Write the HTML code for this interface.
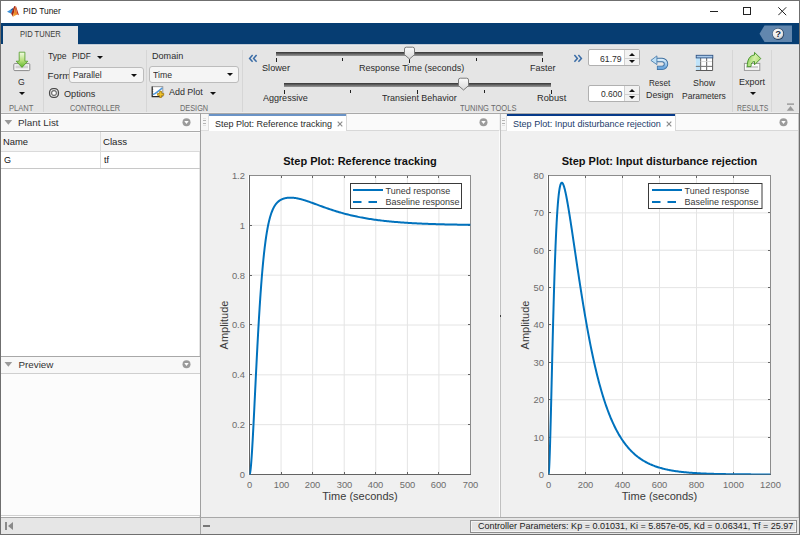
<!DOCTYPE html>
<html><head><meta charset="utf-8">
<style>
*{margin:0;padding:0;box-sizing:border-box}
html,body{width:800px;height:535px;overflow:hidden;background:#f0f0f0;font-family:"Liberation Sans",sans-serif;color:#222}
.a{position:absolute;white-space:nowrap}
.t{position:absolute;white-space:nowrap;line-height:1}
.rb{font-size:9.2px;color:#2c2c2c}
.lbl{font-size:8.3px;color:#6a6a6a}
.sep{position:absolute;top:50px;width:1px;height:62px;background:#d6d6d6}
.tri{position:absolute;width:0;height:0;border-left:3px solid transparent;border-right:3px solid transparent;border-top:3px solid #111}
.ptxt{font-size:9.6px;color:#2a2a2a}
</style></head><body>
<!-- window frame -->
<div class="a" style="left:0;top:0;width:800px;height:535px;border:1px solid #6f6f6f;background:#f0f0f0"></div>
<!-- title bar -->
<div class="a" style="left:1px;top:1px;width:798px;height:22px;background:#fff"></div>
<svg class="a" style="left:4px;top:3px" width="18" height="16" viewBox="0 0 18 16"><defs><linearGradient id="gm" x1="0" y1="1" x2="0.3" y2="0"><stop offset="0" stop-color="#f7c23a"/><stop offset="0.5" stop-color="#ee8a2a"/><stop offset="1" stop-color="#d2561e"/></linearGradient></defs>
<path d="M3,8.8 L7.2,6.2 L8.6,7.4 L7.4,10.8 Z" fill="#3f93da"/>
<path d="M6.6,6.6 L9.6,4.6 L8.6,7.8 Z" fill="#1f5c9e"/>
<path d="M7.2,10.8 L10.3,3.1 L11.3,3.3 L9.0,13.8 Z" fill="#a3260f"/>
<path d="M9.0,13.8 L11.3,3.3 C12.1,5.2 12.6,8.6 13.4,11.4 C11.8,12 10.4,12.8 8.6,14.2 Z" fill="url(#gm)"/>
<path d="M11.3,3.3 L12.1,3.5 C13.0,6 13.9,9 15.0,12.2 L13.4,11.4 C12.6,8.6 12.1,5.2 11.3,3.3 Z" fill="#c23a1c"/>
</svg>
<div class="t" style="left:22.52px;top:7.35px;font-size:8.8px;color:#111;transform:scaleX(0.9554);transform-origin:0 0">PID Tuner</div>
<div class="a" style="left:710px;top:11px;width:8px;height:1px;background:#222"></div>
<div class="a" style="left:743px;top:7px;width:8px;height:8px;border:1px solid #222"></div>
<svg class="a" style="left:778px;top:7px" width="9" height="9" viewBox="0 0 9 9"><path d="M0.3,0.3 L8.2,8.2 M8.2,0.3 L0.3,8.2" stroke="#222" stroke-width="1"/></svg>
<!-- blue band -->
<div class="a" style="left:1px;top:23px;width:798px;height:21px;background:#063d72"></div>
<div class="a" style="left:3px;top:26px;width:75px;height:18px;background:#e5e5e5"></div>
<div class="t" style="left:20.40px;top:29.72px;font-size:8.6px;color:#3c3c3c;transform:scaleX(0.8818);transform-origin:0 0">PID TUNER</div>
<svg class="a" style="left:759px;top:25px" width="34" height="18" viewBox="0 0 34 18"><path d="M5.5,0.5 H33 V17 H5.5 L0.5,8.7 Z" fill="#6287ae"/>
<defs><radialGradient id="gh" cx="0.4" cy="0.35" r="0.7"><stop offset="0" stop-color="#ffffff"/><stop offset="0.7" stop-color="#e8e8e8"/><stop offset="1" stop-color="#b8b8b8"/></radialGradient></defs><circle cx="19.2" cy="9" r="5.9" fill="#243f60"/><circle cx="19" cy="8.7" r="5.3" fill="url(#gh)"/>
<text x="19.1" y="12.2" font-family="Liberation Sans" font-weight="bold" font-size="9.5" fill="#1d2b40" text-anchor="middle">?</text></svg>
<!-- ribbon -->
<div class="a" style="left:1px;top:44px;width:798px;height:69px;background:#e5e5e5"></div>
<div class="a" style="left:78px;top:44px;width:721px;height:1px;background:#c2ccd7"></div>
<div class="a" style="left:78px;top:45px;width:721px;height:1px;background:#eaeaea"></div>
<div class="a" style="left:1px;top:112px;width:798px;height:1px;background:#ececec"></div>
<div class="a" style="left:1px;top:113px;width:798px;height:1px;background:#a9a9a9"></div>
<div class="sep" style="left:43px"></div>
<div class="sep" style="left:146px"></div>
<div class="sep" style="left:242px"></div>
<div class="sep" style="left:732px"></div>
<div class="sep" style="left:771px"></div>
<!-- PLANT -->
<svg class="a" style="left:12px;top:51px" width="20" height="21" viewBox="0 0 20 21">
  <defs><linearGradient id="ga" x1="0" y1="0" x2="0" y2="1"><stop offset="0" stop-color="#f2fbe6"/><stop offset="0.55" stop-color="#b6e07a"/><stop offset="1" stop-color="#5fb52a"/></linearGradient></defs>
  <rect x="1.8" y="12.6" width="16" height="7" rx="1" fill="#f6f6f6" stroke="#8a8a8a"/>
  <rect x="3.5" y="14.5" width="12.5" height="2.8" fill="#d2d2d2"/>
  <path d="M7.2,1.2 H12.9 V10.2 H15.8 L10,16.4 L4.2,10.2 H7.2 Z" fill="url(#ga)" stroke="#4f9a26" stroke-width="0.8" stroke-linejoin="round"/>
</svg>
<div class="t rb" style="left:18.43px;top:76.70px;font-size:9.8px;transform:scaleX(0.8889);transform-origin:0 0">G</div>
<div class="tri" style="left:19px;top:92px"></div>
<div class="t lbl" style="left:9.30px;top:103.99px;font-size:8.4px;transform:scaleX(0.9057);transform-origin:0 0">PLANT</div>
<!-- CONTROLLER -->
<div class="t rb" style="left:47.97px;top:51.40px;font-size:9.8px;transform:scaleX(0.8771);transform-origin:0 0">Type</div>
<div class="t rb" style="left:72.39px;top:51.40px;font-size:9.8px;transform:scaleX(0.8419);transform-origin:0 0">PIDF</div>
<div class="tri" style="left:97px;top:56px"></div>
<div class="t rb" style="left:47.50px;top:70.70px;font-size:9.8px">Form</div>
<div class="a" style="left:69px;top:67px;width:75px;height:16px;border:1px solid #bcbcbc;border-radius:3px;background:#f5f5f5"></div>
<div class="t rb" style="left:72.69px;top:70.20px;font-size:9.8px;transform:scaleX(0.8762);transform-origin:0 0">Parallel</div>
<div class="tri" style="left:131px;top:74px"></div>
<svg class="a" style="left:48px;top:87px" width="12" height="12" viewBox="0 0 12 12"><rect x="1.6" y="1.6" width="8.8" height="8.8" rx="3.6" fill="#f2f2f2" stroke="#4a4a4a" stroke-width="1.3"/><circle cx="6" cy="6" r="2.4" fill="#fff" stroke="#6a6a6a" stroke-width="1.1"/></svg>
<div class="t rb" style="left:64.38px;top:88.70px;font-size:9.8px;transform:scaleX(0.9293);transform-origin:0 0">Options</div>
<div class="t lbl" style="left:69.78px;top:103.89px;font-size:8.4px;transform:scaleX(0.8761);transform-origin:0 0">CONTROLLER</div>
<!-- DESIGN -->
<div class="t rb" style="left:151.84px;top:51.40px;font-size:9.8px;transform:scaleX(0.9252);transform-origin:0 0">Domain</div>
<div class="a" style="left:149px;top:66px;width:90px;height:17px;border:1px solid #bcbcbc;border-radius:3px;background:#f5f5f5"></div>
<div class="t rb" style="left:153.31px;top:69.70px;font-size:9.8px;transform:scaleX(0.8857);transform-origin:0 0">Time</div>
<div class="tri" style="left:227px;top:73px"></div>
<svg class="a" style="left:148px;top:82px" width="20" height="18" viewBox="0 0 20 18">
<rect x="4.2" y="4.7" width="10.6" height="9.8" fill="#fff" stroke="#8a8a8a" stroke-width="0.9"/>
<path d="M4.2,4.4 V14.6 H12" fill="none" stroke="#2a2a2a" stroke-width="1.1"/>
<path d="M4.2,7.3 H5.2 M4.2,9.6 H5.2 M4.2,11.9 H5.2" stroke="#333" stroke-width="0.8"/>
<path d="M4.8,12.6 C8,11.6 10,9.2 14.4,5.8" fill="none" stroke="#4f97da" stroke-width="1.5"/>
<path d="M11.7,9.3 h1.9 v2.1 h2.1 v1.9 h-2.1 v2.1 h-1.9 v-2.1 h-2.1 v-1.9 h2.1 z" fill="#f4c72a" stroke="#a07408" stroke-width="0.8" stroke-linejoin="round"/>
</svg>
<div class="t rb" style="left:169.31px;top:87.20px;font-size:9.8px;transform:scaleX(0.9108);transform-origin:0 0">Add Plot</div>
<div class="tri" style="left:210px;top:92px"></div>
<div class="t lbl" style="left:180.41px;top:103.89px;font-size:8.4px;transform:scaleX(0.8768);transform-origin:0 0">DESIGN</div>
<!-- TUNING TOOLS -->
<svg class="a" style="left:248px;top:54px" width="10" height="9" viewBox="0 0 10 9"><path d="M4.6,1 L1.6,4.4 L4.6,7.8 M8.6,1 L5.6,4.4 L8.6,7.8" fill="none" stroke="#3a6ca6" stroke-width="1.5"/></svg>
<svg class="a" style="left:573px;top:54px" width="10" height="9" viewBox="0 0 10 9"><path d="M1.4,1 L4.4,4.4 L1.4,7.8 M5.4,1 L8.4,4.4 L5.4,7.8" fill="none" stroke="#3a6ca6" stroke-width="1.5"/></svg>
<div class="a" style="left:276px;top:52px;width:267px;height:4px;background:linear-gradient(#333,#9a9a9a)"></div>
<div class="a" style="left:284px;top:83px;width:267px;height:4px;background:linear-gradient(#333,#9a9a9a)"></div>
<!-- ticks -->
<div class="a" style="left:276px;top:58px;width:1px;height:4px;background:#222"></div>
<div class="a" style="left:342px;top:58px;width:1px;height:3px;background:#222"></div>
<div class="a" style="left:409px;top:59px;width:1px;height:4px;background:#222"></div>
<div class="a" style="left:476px;top:58px;width:1px;height:3px;background:#222"></div>
<div class="a" style="left:542px;top:58px;width:1px;height:4px;background:#222"></div>
<div class="a" style="left:284px;top:90px;width:1px;height:4px;background:#222"></div>
<div class="a" style="left:350px;top:90px;width:1px;height:3px;background:#222"></div>
<div class="a" style="left:417px;top:90px;width:1px;height:4px;background:#222"></div>
<div class="a" style="left:484px;top:90px;width:1px;height:3px;background:#222"></div>
<div class="a" style="left:551px;top:90px;width:1px;height:4px;background:#222"></div>
<svg class="a" style="left:404px;top:46px" width="11" height="14" viewBox="0 0 11 14"><defs><linearGradient id="tg" x1="0" y1="0" x2="0" y2="1"><stop offset="0" stop-color="#fbfbfb"/><stop offset="1" stop-color="#d9d9d9"/></linearGradient></defs><path d="M0.5,3 Q0.5,1.2 2.3,1.2 H8.7 Q10.5,1.2 10.5,3 V8.7 L5.5,13 L0.5,8.7 Z" fill="url(#tg)" stroke="#7a7a7a"/></svg>
<svg class="a" style="left:458px;top:77px" width="11" height="14" viewBox="0 0 11 14"><path d="M0.5,3 Q0.5,1.2 2.3,1.2 H8.7 Q10.5,1.2 10.5,3 V8.7 L5.5,13 L0.5,8.7 Z" fill="url(#tg)" stroke="#7a7a7a"/></svg>
<div class="t ptxt" style="left:262.42px;top:62.50px;font-size:9.8px;transform:scaleX(0.9345);transform-origin:0 0">Slower</div>
<div class="t ptxt" style="left:359.04px;top:62.70px;font-size:9.8px;transform:scaleX(0.9248);transform-origin:0 0">Response Time (seconds)</div>
<div class="t ptxt" style="left:530.20px;top:62.70px;font-size:9.8px;transform:scaleX(0.9174);transform-origin:0 0">Faster</div>
<div class="t ptxt" style="left:262.65px;top:93.40px;font-size:9.8px;transform:scaleX(0.9229);transform-origin:0 0">Aggressive</div>
<div class="t ptxt" style="left:381.65px;top:93.40px;font-size:9.8px;transform:scaleX(0.9113);transform-origin:0 0">Transient Behavior</div>
<div class="t ptxt" style="left:536.68px;top:93.30px;font-size:9.8px;transform:scaleX(0.9410);transform-origin:0 0">Robust</div>
<!-- spinners -->
<div class="a" style="left:588px;top:49px;width:52px;height:17px;border:1px solid #b0b0b0;border-radius:2px;background:#fff"></div>
<div class="a" style="left:624px;top:50px;width:15px;height:15px;background:#f2f2f2;border-left:1px solid #d0d0d0"></div>
<div class="a" style="left:625px;top:58px;width:14px;height:1px;background:#d0d0d0"></div>
<div class="tri" style="left:629px;top:53px;border-top:0;border-bottom:3px solid #111"></div>
<div class="tri" style="left:629px;top:60px"></div>
<div class="t rb" style="left:600.40px;top:53.70px;font-size:9.8px;transform:scaleX(0.8842);transform-origin:0 0">61.79</div>
<div class="a" style="left:588px;top:85px;width:52px;height:17px;border:1px solid #b0b0b0;border-radius:2px;background:#fff"></div>
<div class="a" style="left:624px;top:86px;width:15px;height:15px;background:#f2f2f2;border-left:1px solid #d0d0d0"></div>
<div class="a" style="left:625px;top:94px;width:14px;height:1px;background:#d0d0d0"></div>
<div class="tri" style="left:629px;top:89px;border-top:0;border-bottom:3px solid #111"></div>
<div class="tri" style="left:629px;top:96px"></div>
<div class="t rb" style="left:600.63px;top:89.40px;font-size:9.8px;transform:scaleX(0.8660);transform-origin:0 0">0.600</div>
<!-- Reset Design -->
<svg class="a" style="left:646px;top:52px" width="28" height="22" viewBox="0 0 28 22"><defs><linearGradient id="gr" x1="0" y1="0" x2="0" y2="1"><stop offset="0" stop-color="#d6ecfb"/><stop offset="1" stop-color="#6aa6de"/></linearGradient></defs>
<path d="M10.6,8 H16.1 A3.9,3.9 0 0 1 16.1,15.85 H10.9" fill="none" stroke="#3d6e9e" stroke-width="4.4"/>
<path d="M10.6,8 H16.1 A3.9,3.9 0 0 1 16.1,15.85 H11.6" fill="none" stroke="url(#gr)" stroke-width="2.6"/>
<path d="M4.9,8.4 L10.9,3.9 L10.9,12.6 Z" fill="#bfe0f6" stroke="#4d7fae" stroke-width="0.9" stroke-linejoin="round"/></svg>
<div class="t rb" style="left:648.72px;top:77.80px;font-size:9.8px;transform:scaleX(0.8280);transform-origin:0 0">Reset</div>
<div class="t rb" style="left:646.05px;top:89.80px;font-size:9.8px;transform:scaleX(0.9017);transform-origin:0 0">Design</div>
<!-- Show Parameters -->
<svg class="a" style="left:695px;top:54px" width="19" height="17" viewBox="0 0 19 17">
<rect x="0.8" y="1" width="17.2" height="15.8" fill="#fff"/>
<rect x="0.8" y="3.8" width="4.4" height="13" fill="#bfe3fa"/>
<path d="M5.6,3.8 V16.6 M11.6,3.8 V16.6" stroke="#7a7a7a" stroke-width="1.2"/>
<path d="M0.8,12.4 H17.8" stroke="#7a7a7a" stroke-width="1.1"/>
<path d="M5.6,7.5 H17.8" stroke="#d6d6d6" stroke-width="0.8"/>
<path d="M17.6,3.8 V16.5 H0.8" fill="none" stroke="#5a5a5a" stroke-width="1"/>
<rect x="1.2" y="1.3" width="16.6" height="2.6" fill="#a9c9ea" stroke="#2d5283" stroke-width="0.9"/>
</svg>
<div class="t rb" style="left:693.24px;top:77.90px;font-size:9.8px;transform:scaleX(0.9031);transform-origin:0 0">Show</div>
<div class="t rb" style="left:682.22px;top:90.50px;font-size:9.8px;transform:scaleX(0.8660);transform-origin:0 0">Parameters</div>
<!-- Export -->
<svg class="a" style="left:738px;top:48px" width="28" height="26" viewBox="0 0 28 26"><defs><linearGradient id="ge" x1="0" y1="0" x2="1" y2="0.3"><stop offset="0" stop-color="#7cc84a"/><stop offset="0.6" stop-color="#d5f0a8"/><stop offset="1" stop-color="#b4e07a"/></linearGradient></defs>
<rect x="6.4" y="15.4" width="15.4" height="7" fill="#fafafa" stroke="#9a9a9a" stroke-width="1"/>
<rect x="8" y="18" width="12" height="2.2" fill="#d0d0d0"/>
<path d="M9.2,18.7 C9.2,12 11.5,7.4 16.5,7 V4.4 L22.8,10.5 L16.5,16.8 V13.5 C14,13.5 13,15.5 13,18.6 Z" fill="url(#ge)" stroke="#3f8f22" stroke-width="0.9" stroke-linejoin="round"/></svg>
<div class="t rb" style="left:739.01px;top:77.00px;font-size:9.8px;transform:scaleX(0.9153);transform-origin:0 0">Export</div>
<div class="tri" style="left:750px;top:92px"></div>
<div class="t lbl" style="left:736.59px;top:103.89px;font-size:8.4px;transform:scaleX(0.8215);transform-origin:0 0">RESULTS</div>
<div class="t lbl" style="left:459.50px;top:103.89px;font-size:8.4px;transform:scaleX(0.9028);transform-origin:0 0">TUNING TOOLS</div>
<svg class="a" style="left:786px;top:103px" width="10" height="9" viewBox="0 0 10 9"><rect x="1" y="0.5" width="7" height="1.2" fill="#8a8a8a"/><path d="M0.8,7.8 L4.5,2.9 L8.2,7.8 Z" fill="#9a9a9a"/></svg>

<!-- LEFT PANEL -->
<div class="a" style="left:1px;top:114px;width:199px;height:404px;background:#fff"></div>
<div class="a" style="left:199px;top:114px;width:1px;height:403px;background:#e4e4e4"></div>
<div class="a" style="left:200px;top:113px;width:1px;height:421px;background:#a0a0a0"></div>
<div class="a" style="left:1px;top:114px;width:199px;height:17px;background:#f9f9f9;border-top:1px solid #fefefe"></div>
<div class="a" style="left:1px;top:130px;width:199px;height:1px;background:#fcfcfc"></div>
<div class="a" style="left:1px;top:131px;width:199px;height:1px;background:#aaaaaa"></div>
<svg class="a" style="left:4px;top:119px" width="9" height="7" viewBox="0 0 9 7"><path d="M0.5,0.9 H8.2 L4.35,5.7 Z" fill="#9a9a9a"/></svg>
<div class="t" style="left:18.25px;top:117.60px;font-size:9.8px;color:#333;transform:scaleX(1.0063);transform-origin:0 0">Plant List</div>
<svg class="a" style="left:182px;top:118px" width="10" height="9" viewBox="0 0 10 9"><circle cx="4.5" cy="4.3" r="4" fill="#9b9b9b"/><path d="M2.3,3 H6.7 L4.5,6 Z" fill="#fff"/></svg>
<div class="a" style="left:1px;top:132px;width:199px;height:19px;background:#f4f4f4;border-top:1px solid #fbfbfb"></div>
<div class="a" style="left:1px;top:151px;width:199px;height:1px;background:#dadada"></div>
<div class="a" style="left:1px;top:168px;width:199px;height:1px;background:#c8c8c8"></div>
<div class="a" style="left:100px;top:132px;width:1px;height:36px;background:#dcdcdc"></div>
<div class="t" style="left:3.27px;top:136.70px;font-size:9.8px;color:#222;transform:scaleX(0.9604);transform-origin:0 0">Name</div>
<div class="t" style="left:103.36px;top:136.70px;font-size:9.8px;color:#222;transform:scaleX(0.9853);transform-origin:0 0">Class</div>
<div class="t" style="left:3.73px;top:154.60px;font-size:9.8px;color:#111;transform:scaleX(0.9185);transform-origin:0 0">G</div>
<div class="t" style="left:103.85px;top:154.60px;font-size:9.8px;color:#111;transform:scaleX(0.9043);transform-origin:0 0">tf</div>
<div class="a" style="left:1px;top:356px;width:199px;height:1px;background:#a8a8a8"></div>
<div class="a" style="left:1px;top:357px;width:199px;height:16px;background:#f8f8f8"></div>
<div class="a" style="left:1px;top:373px;width:199px;height:1px;background:#cfcfcf"></div>
<div class="a" style="left:1px;top:374px;width:199px;height:141px;background:#fcfcfc"></div>
<svg class="a" style="left:4px;top:361px" width="9" height="7" viewBox="0 0 9 7"><path d="M0.5,0.9 H8.2 L4.35,5.7 Z" fill="#9a9a9a"/></svg>
<div class="t" style="left:18.50px;top:360.20px;font-size:9.8px;color:#333">Preview</div>
<svg class="a" style="left:182px;top:360px" width="10" height="9" viewBox="0 0 10 9"><circle cx="4.5" cy="4.3" r="4" fill="#9b9b9b"/><path d="M2.3,3 H6.7 L4.5,6 Z" fill="#fff"/></svg>
<div class="a" style="left:1px;top:515px;width:199px;height:1px;background:#d0d0d0"></div>

<!-- DOC AREA -->
<div class="a" style="left:499px;top:131px;width:1px;height:386px;background:#fcfcfc"></div>
<div class="a" style="left:500px;top:114px;width:1px;height:403px;background:#c0c0c0"></div>
<div class="a" style="left:500px;top:315px;width:1px;height:2px;background:#3a3a3a"></div>
<!-- left doc header -->
<div class="a" style="left:201px;top:114px;width:8px;height:17px;background:#f7f7f7;border-right:1px solid #dedede;border-bottom:1px solid #dedede"></div>
<div class="a" style="left:203px;top:118px;width:3px;height:1px;background:#e2e2e2"></div>
<div class="a" style="left:203px;top:120px;width:3px;height:1px;background:#b4b4b4"></div>
<div class="a" style="left:203px;top:123px;width:3px;height:1px;background:#b4b4b4"></div>
<div class="a" style="left:203px;top:125px;width:3px;height:1px;background:#e2e2e2"></div>
<div class="a" style="left:209px;top:114px;width:137px;height:17px;background:#fff"></div>
<div class="a" style="left:209px;top:114px;width:137px;height:2px;background:#6a93c6"></div>
<div class="t ptxt" style="left:214.54px;top:118.70px;font-size:9.8px;transform:scaleX(0.9186);transform-origin:0 0">Step Plot: Reference tracking</div>
<svg class="a" style="left:337px;top:121px" width="6" height="6" viewBox="0 0 6 6"><path d="M0.7,0.7 L5.3,5.3 M5.3,0.7 L0.7,5.3" stroke="#8c8c8c" stroke-width="1.15"/></svg>
<div class="a" style="left:346px;top:114px;width:153px;height:17px;background:#fafafa;border-left:1px solid #d8d8d8;border-bottom:1px solid #d8d8d8"></div>
<svg class="a" style="left:479px;top:118px" width="10" height="9" viewBox="0 0 10 9"><circle cx="4.5" cy="4.3" r="4" fill="#9b9b9b"/><path d="M2.3,3 H6.7 L4.5,6 Z" fill="#fff"/></svg>
<!-- right doc header -->
<div class="a" style="left:501px;top:114px;width:6px;height:17px;background:#f7f7f7;border-right:1px solid #dedede;border-bottom:1px solid #dedede"></div>
<div class="a" style="left:502px;top:118px;width:3px;height:1px;background:#e2e2e2"></div>
<div class="a" style="left:502px;top:120px;width:3px;height:1px;background:#b4b4b4"></div>
<div class="a" style="left:502px;top:123px;width:3px;height:1px;background:#b4b4b4"></div>
<div class="a" style="left:502px;top:125px;width:3px;height:1px;background:#e2e2e2"></div>
<div class="a" style="left:507px;top:114px;width:168px;height:17px;background:#fff"></div>
<div class="a" style="left:507px;top:114px;width:168px;height:2px;background:#063a8a"></div>
<div class="t ptxt" style="left:513.04px;top:118.70px;color:#1b3d6b;font-size:9.8px;transform:scaleX(0.9237);transform-origin:0 0">Step Plot: Input disturbance rejection</div>
<svg class="a" style="left:666px;top:121px" width="6" height="6" viewBox="0 0 6 6"><path d="M0.7,0.7 L5.3,5.3 M5.3,0.7 L0.7,5.3" stroke="#8c8c8c" stroke-width="1.15"/></svg>
<div class="a" style="left:675px;top:114px;width:123px;height:17px;background:#fafafa;border-left:1px solid #d8d8d8;border-bottom:1px solid #d8d8d8"></div>
<svg class="a" style="left:779px;top:118px" width="10" height="9" viewBox="0 0 10 9"><circle cx="4.5" cy="4.3" r="4" fill="#9b9b9b"/><path d="M2.3,3 H6.7 L4.5,6 Z" fill="#fff"/></svg>
<div class="a" style="left:798px;top:114px;width:1px;height:404px;background:#c8c8c8"></div>

<!-- PLOTS -->
<svg class="a" style="left:0;top:0" width="800" height="535" viewBox="0 0 800 535">
  <g font-family="Liberation Sans">
  <rect x="248.0" y="175.5" width="222.5" height="299.0" fill="#fff"/>
<line x1="281.07" y1="175.5" x2="281.07" y2="474.5" stroke="#e4e4e4" stroke-width="1"/>
<line x1="312.64" y1="175.5" x2="312.64" y2="474.5" stroke="#e4e4e4" stroke-width="1"/>
<line x1="344.21" y1="175.5" x2="344.21" y2="474.5" stroke="#e4e4e4" stroke-width="1"/>
<line x1="375.79" y1="175.5" x2="375.79" y2="474.5" stroke="#e4e4e4" stroke-width="1"/>
<line x1="407.36" y1="175.5" x2="407.36" y2="474.5" stroke="#e4e4e4" stroke-width="1"/>
<line x1="438.93" y1="175.5" x2="438.93" y2="474.5" stroke="#e4e4e4" stroke-width="1"/>
<line x1="249.5" y1="424.67" x2="470.5" y2="424.67" stroke="#e4e4e4" stroke-width="1"/>
<line x1="249.5" y1="374.83" x2="470.5" y2="374.83" stroke="#e4e4e4" stroke-width="1"/>
<line x1="249.5" y1="325.00" x2="470.5" y2="325.00" stroke="#e4e4e4" stroke-width="1"/>
<line x1="249.5" y1="275.17" x2="470.5" y2="275.17" stroke="#e4e4e4" stroke-width="1"/>
<line x1="249.5" y1="225.33" x2="470.5" y2="225.33" stroke="#e4e4e4" stroke-width="1"/>
<line x1="249.50" y1="474.5" x2="249.50" y2="472.0" stroke="#636363" stroke-width="1"/>
<line x1="249.50" y1="175.5" x2="249.50" y2="178.0" stroke="#636363" stroke-width="1"/>
<text transform="translate(249.50,488.10) scale(0.955,1)" font-size="9.8" fill="#6c6c6c" text-anchor="middle">0</text>
<line x1="281.50" y1="474.5" x2="281.50" y2="472.0" stroke="#636363" stroke-width="1"/>
<line x1="281.50" y1="175.5" x2="281.50" y2="178.0" stroke="#636363" stroke-width="1"/>
<text transform="translate(281.50,488.10) scale(0.955,1)" font-size="9.8" fill="#6c6c6c" text-anchor="middle">100</text>
<line x1="312.50" y1="474.5" x2="312.50" y2="472.0" stroke="#636363" stroke-width="1"/>
<line x1="312.50" y1="175.5" x2="312.50" y2="178.0" stroke="#636363" stroke-width="1"/>
<text transform="translate(312.50,488.10) scale(0.955,1)" font-size="9.8" fill="#6c6c6c" text-anchor="middle">200</text>
<line x1="344.50" y1="474.5" x2="344.50" y2="472.0" stroke="#636363" stroke-width="1"/>
<line x1="344.50" y1="175.5" x2="344.50" y2="178.0" stroke="#636363" stroke-width="1"/>
<text transform="translate(344.50,488.10) scale(0.955,1)" font-size="9.8" fill="#6c6c6c" text-anchor="middle">300</text>
<line x1="375.50" y1="474.5" x2="375.50" y2="472.0" stroke="#636363" stroke-width="1"/>
<line x1="375.50" y1="175.5" x2="375.50" y2="178.0" stroke="#636363" stroke-width="1"/>
<text transform="translate(375.50,488.10) scale(0.955,1)" font-size="9.8" fill="#6c6c6c" text-anchor="middle">400</text>
<line x1="407.50" y1="474.5" x2="407.50" y2="472.0" stroke="#636363" stroke-width="1"/>
<line x1="407.50" y1="175.5" x2="407.50" y2="178.0" stroke="#636363" stroke-width="1"/>
<text transform="translate(407.50,488.10) scale(0.955,1)" font-size="9.8" fill="#6c6c6c" text-anchor="middle">500</text>
<line x1="438.50" y1="474.5" x2="438.50" y2="472.0" stroke="#636363" stroke-width="1"/>
<line x1="438.50" y1="175.5" x2="438.50" y2="178.0" stroke="#636363" stroke-width="1"/>
<text transform="translate(438.50,488.10) scale(0.955,1)" font-size="9.8" fill="#6c6c6c" text-anchor="middle">600</text>
<line x1="470.50" y1="474.5" x2="470.50" y2="472.0" stroke="#636363" stroke-width="1"/>
<line x1="470.50" y1="175.5" x2="470.50" y2="178.0" stroke="#636363" stroke-width="1"/>
<text transform="translate(470.50,488.10) scale(0.955,1)" font-size="9.8" fill="#6c6c6c" text-anchor="middle">700</text>
<line x1="249.5" y1="474.50" x2="252.0" y2="474.50" stroke="#636363" stroke-width="1"/>
<line x1="470.5" y1="474.50" x2="468.0" y2="474.50" stroke="#636363" stroke-width="1"/>
<text transform="translate(244.90,478.00) scale(0.955,1)" font-size="9.8" fill="#6c6c6c" text-anchor="end">0</text>
<line x1="249.5" y1="424.50" x2="252.0" y2="424.50" stroke="#636363" stroke-width="1"/>
<line x1="470.5" y1="424.50" x2="468.0" y2="424.50" stroke="#636363" stroke-width="1"/>
<text transform="translate(244.90,428.00) scale(0.955,1)" font-size="9.8" fill="#6c6c6c" text-anchor="end">0.2</text>
<line x1="249.5" y1="374.50" x2="252.0" y2="374.50" stroke="#636363" stroke-width="1"/>
<line x1="470.5" y1="374.50" x2="468.0" y2="374.50" stroke="#636363" stroke-width="1"/>
<text transform="translate(244.90,378.00) scale(0.955,1)" font-size="9.8" fill="#6c6c6c" text-anchor="end">0.4</text>
<line x1="249.5" y1="324.50" x2="252.0" y2="324.50" stroke="#636363" stroke-width="1"/>
<line x1="470.5" y1="324.50" x2="468.0" y2="324.50" stroke="#636363" stroke-width="1"/>
<text transform="translate(244.90,328.00) scale(0.955,1)" font-size="9.8" fill="#6c6c6c" text-anchor="end">0.6</text>
<line x1="249.5" y1="275.50" x2="252.0" y2="275.50" stroke="#636363" stroke-width="1"/>
<line x1="470.5" y1="275.50" x2="468.0" y2="275.50" stroke="#636363" stroke-width="1"/>
<text transform="translate(244.90,279.00) scale(0.955,1)" font-size="9.8" fill="#6c6c6c" text-anchor="end">0.8</text>
<line x1="249.5" y1="225.50" x2="252.0" y2="225.50" stroke="#636363" stroke-width="1"/>
<line x1="470.5" y1="225.50" x2="468.0" y2="225.50" stroke="#636363" stroke-width="1"/>
<text transform="translate(244.90,229.00) scale(0.955,1)" font-size="9.8" fill="#6c6c6c" text-anchor="end">1</text>
<line x1="249.5" y1="175.50" x2="252.0" y2="175.50" stroke="#636363" stroke-width="1"/>
<line x1="470.5" y1="175.50" x2="468.0" y2="175.50" stroke="#636363" stroke-width="1"/>
<text transform="translate(244.90,179.00) scale(0.955,1)" font-size="9.8" fill="#6c6c6c" text-anchor="end">1.2</text>
<path d="M249.0,175.5 H470.5 V475.0" fill="none" stroke="#8c8c8c" stroke-width="1"/>
<path d="M249.5,175.0 V474.5 H471.0" fill="none" stroke="#636363" stroke-width="1"/>
<text x="360.00" y="165" font-size="11" font-weight="bold" fill="#111" text-anchor="middle">Step Plot: Reference tracking</text>
<text x="360.00" y="499.5" font-size="11" fill="#3a3a3a" text-anchor="middle">Time (seconds)</text>
<text transform="translate(228.3,325) rotate(-90)" font-size="11" fill="#3a3a3a" text-anchor="middle">Amplitude</text>
<defs><clipPath id="c249"><rect x="249.5" y="175.5" width="221.0" height="299.0"/></clipPath></defs>
<path d="M249.50,474.50 249.82,474.04 250.13,472.71 250.45,470.60 250.76,467.80 251.08,464.38 251.39,460.41 251.71,455.97 252.03,451.11 252.34,445.89 252.66,440.37 252.97,434.59 253.29,428.60 253.60,422.44 253.92,416.15 254.24,409.77 254.55,403.32 254.87,396.84 255.18,390.35 255.50,383.87 255.81,377.43 256.13,371.04 256.45,364.72 256.76,358.49 257.08,352.36 257.39,346.34 257.71,340.45 258.02,334.68 258.34,329.04 258.66,323.55 258.97,318.21 259.29,313.01 259.60,307.97 259.92,303.08 260.23,298.35 260.55,293.78 260.87,289.36 261.18,285.10 261.50,280.99 261.81,277.04 262.13,273.24 262.44,269.58 262.76,266.07 263.08,262.71 263.39,259.48 263.71,256.39 264.02,253.43 264.34,250.60 264.65,247.90 264.97,245.32 265.29,242.85 265.60,240.50 265.92,238.25 266.23,236.12 266.55,234.08 266.86,232.14 267.18,230.30 267.50,228.55 267.81,226.88 268.13,225.30 268.44,223.79 268.76,222.36 269.07,221.01 269.39,219.72 269.71,218.50 270.02,217.34 270.34,216.24 270.65,215.20 270.97,214.21 271.28,213.28 271.60,212.39 271.92,211.55 272.23,210.76 272.55,210.01 272.86,209.30 273.18,208.62 273.49,207.98 273.81,207.38 274.13,206.80 274.44,206.26 274.76,205.75 275.07,205.26 275.39,204.80 275.70,204.37 276.02,203.96 276.34,203.57 276.65,203.20 276.97,202.85 277.28,202.51 277.60,202.20 277.91,201.90 278.23,201.62 278.55,201.36 278.86,201.10 279.18,200.87 279.49,200.64 279.81,200.43 280.12,200.22 280.44,200.03 280.76,199.85 281.07,199.68 281.39,199.52 281.70,199.37 282.02,199.22 282.33,199.09 282.65,198.96 282.97,198.84 283.28,198.73 283.60,198.62 283.91,198.52 284.23,198.43 284.54,198.35 284.86,198.27 285.18,198.19 285.49,198.12 285.81,198.06 286.12,198.00 286.44,197.95 286.75,197.90 287.07,197.85 287.39,197.81 287.70,197.78 288.02,197.75 288.33,197.72 288.65,197.70 288.96,197.68 289.28,197.67 289.60,197.66 289.91,197.65 290.23,197.65 290.54,197.65 290.86,197.65 291.17,197.66 291.49,197.67 291.81,197.68 292.12,197.70 292.44,197.72 292.75,197.74 293.07,197.77 293.38,197.80 293.70,197.83 294.02,197.87 294.33,197.90 294.65,197.94 294.96,197.99 295.28,198.03 295.59,198.08 295.91,198.13 296.23,198.18 296.54,198.24 296.86,198.29 297.17,198.35 297.49,198.41 297.80,198.48 298.12,198.54 298.44,198.61 298.75,198.68 299.07,198.75 299.38,198.83 299.70,198.90 300.01,198.98 300.33,199.06 300.65,199.14 300.96,199.22 301.28,199.30 301.59,199.39 301.91,199.48 302.22,199.57 302.54,199.65 302.86,199.75 303.17,199.84 303.49,199.93 303.80,200.03 304.12,200.12 304.43,200.22 304.75,200.32 305.07,200.42 305.38,200.52 305.70,200.62 306.01,200.72 306.33,200.82 306.64,200.93 306.96,201.03 307.28,201.14 307.59,201.25 307.91,201.35 308.22,201.46 308.54,201.57 308.85,201.68 309.17,201.79 309.49,201.90 309.80,202.01 310.12,202.12 310.43,202.24 310.75,202.35 311.06,202.46 311.38,202.58 311.70,202.69 312.01,202.80 312.33,202.92 312.64,203.03 313.91,203.49 315.17,203.96 316.43,204.43 317.69,204.89 318.96,205.36 320.22,205.83 321.48,206.29 322.75,206.75 324.01,207.20 325.27,207.65 326.53,208.10 327.80,208.54 329.06,208.97 330.32,209.40 331.59,209.82 332.85,210.23 334.11,210.63 335.37,211.03 336.64,211.42 337.90,211.81 339.16,212.18 340.43,212.55 341.69,212.91 342.95,213.26 344.21,213.60 345.48,213.93 346.74,214.26 348.00,214.58 349.27,214.89 350.53,215.20 351.79,215.49 353.05,215.78 354.32,216.06 355.58,216.34 356.84,216.60 358.11,216.86 359.37,217.11 360.63,217.36 361.89,217.60 363.16,217.83 364.42,218.06 365.68,218.28 366.95,218.49 368.21,218.70 369.47,218.90 370.73,219.10 372.00,219.29 373.26,219.47 374.52,219.65 375.79,219.83 377.05,220.00 378.31,220.16 379.57,220.32 380.84,220.48 382.10,220.63 383.36,220.77 384.63,220.91 385.89,221.05 387.15,221.18 388.41,221.31 389.68,221.44 390.94,221.56 392.20,221.68 393.47,221.79 394.73,221.90 395.99,222.01 397.25,222.11 398.52,222.22 399.78,222.31 401.04,222.41 402.31,222.50 403.57,222.59 404.83,222.68 406.09,222.76 407.36,222.84 408.62,222.92 409.88,223.00 411.15,223.07 412.41,223.14 413.67,223.21 414.93,223.28 416.20,223.34 417.46,223.40 418.72,223.47 419.99,223.52 421.25,223.58 422.51,223.64 423.77,223.69 425.04,223.74 426.30,223.79 427.56,223.84 428.83,223.89 430.09,223.94 431.35,223.98 432.61,224.02 433.88,224.06 435.14,224.10 436.40,224.14 437.67,224.18 438.93,224.22 440.19,224.25 441.45,224.29 442.72,224.32 443.98,224.35 445.24,224.38 446.51,224.41 447.77,224.44 449.03,224.47 450.29,224.50 451.56,224.53 452.82,224.55 454.08,224.58 455.35,224.60 456.61,224.62 457.87,224.65 459.13,224.67 460.40,224.69 461.66,224.71 462.92,224.73 464.19,224.75 465.45,224.77 466.71,224.79 467.97,224.80 469.24,224.82 470.50,224.84" fill="none" stroke="#0072bd" stroke-width="2" stroke-linejoin="round" clip-path="url(#c249)"/>
<rect x="350.5" y="183.5" width="111" height="25" fill="#fff" stroke="#3a3a3a" stroke-width="1"/>
<line x1="353.0" y1="190.0" x2="383.0" y2="190.0" stroke="#0072bd" stroke-width="2"/>
<line x1="353.0" y1="202.0" x2="383.0" y2="202.0" stroke="#0072bd" stroke-width="2" stroke-dasharray="8.5,7"/>
<text x="385.5" y="193.6" font-size="9" fill="#3a3a3a">Tuned response</text>
<text x="385.5" y="205.4" font-size="9" fill="#3a3a3a">Baseline response</text>
<rect x="547.0" y="175.5" width="223.5" height="299.0" fill="#fff"/>
<line x1="585.50" y1="175.5" x2="585.50" y2="474.5" stroke="#e4e4e4" stroke-width="1"/>
<line x1="622.50" y1="175.5" x2="622.50" y2="474.5" stroke="#e4e4e4" stroke-width="1"/>
<line x1="659.50" y1="175.5" x2="659.50" y2="474.5" stroke="#e4e4e4" stroke-width="1"/>
<line x1="696.50" y1="175.5" x2="696.50" y2="474.5" stroke="#e4e4e4" stroke-width="1"/>
<line x1="733.50" y1="175.5" x2="733.50" y2="474.5" stroke="#e4e4e4" stroke-width="1"/>
<line x1="548.5" y1="437.12" x2="770.5" y2="437.12" stroke="#e4e4e4" stroke-width="1"/>
<line x1="548.5" y1="399.75" x2="770.5" y2="399.75" stroke="#e4e4e4" stroke-width="1"/>
<line x1="548.5" y1="362.38" x2="770.5" y2="362.38" stroke="#e4e4e4" stroke-width="1"/>
<line x1="548.5" y1="325.00" x2="770.5" y2="325.00" stroke="#e4e4e4" stroke-width="1"/>
<line x1="548.5" y1="287.62" x2="770.5" y2="287.62" stroke="#e4e4e4" stroke-width="1"/>
<line x1="548.5" y1="250.25" x2="770.5" y2="250.25" stroke="#e4e4e4" stroke-width="1"/>
<line x1="548.5" y1="212.88" x2="770.5" y2="212.88" stroke="#e4e4e4" stroke-width="1"/>
<line x1="548.50" y1="474.5" x2="548.50" y2="472.0" stroke="#636363" stroke-width="1"/>
<line x1="548.50" y1="175.5" x2="548.50" y2="178.0" stroke="#636363" stroke-width="1"/>
<text transform="translate(548.50,488.10) scale(0.955,1)" font-size="9.8" fill="#6c6c6c" text-anchor="middle">0</text>
<line x1="585.50" y1="474.5" x2="585.50" y2="472.0" stroke="#636363" stroke-width="1"/>
<line x1="585.50" y1="175.5" x2="585.50" y2="178.0" stroke="#636363" stroke-width="1"/>
<text transform="translate(585.50,488.10) scale(0.955,1)" font-size="9.8" fill="#6c6c6c" text-anchor="middle">200</text>
<line x1="622.50" y1="474.5" x2="622.50" y2="472.0" stroke="#636363" stroke-width="1"/>
<line x1="622.50" y1="175.5" x2="622.50" y2="178.0" stroke="#636363" stroke-width="1"/>
<text transform="translate(622.50,488.10) scale(0.955,1)" font-size="9.8" fill="#6c6c6c" text-anchor="middle">400</text>
<line x1="659.50" y1="474.5" x2="659.50" y2="472.0" stroke="#636363" stroke-width="1"/>
<line x1="659.50" y1="175.5" x2="659.50" y2="178.0" stroke="#636363" stroke-width="1"/>
<text transform="translate(659.50,488.10) scale(0.955,1)" font-size="9.8" fill="#6c6c6c" text-anchor="middle">600</text>
<line x1="696.50" y1="474.5" x2="696.50" y2="472.0" stroke="#636363" stroke-width="1"/>
<line x1="696.50" y1="175.5" x2="696.50" y2="178.0" stroke="#636363" stroke-width="1"/>
<text transform="translate(696.50,488.10) scale(0.955,1)" font-size="9.8" fill="#6c6c6c" text-anchor="middle">800</text>
<line x1="733.50" y1="474.5" x2="733.50" y2="472.0" stroke="#636363" stroke-width="1"/>
<line x1="733.50" y1="175.5" x2="733.50" y2="178.0" stroke="#636363" stroke-width="1"/>
<text transform="translate(733.50,488.10) scale(0.955,1)" font-size="9.8" fill="#6c6c6c" text-anchor="middle">1000</text>
<line x1="770.50" y1="474.5" x2="770.50" y2="472.0" stroke="#636363" stroke-width="1"/>
<line x1="770.50" y1="175.5" x2="770.50" y2="178.0" stroke="#636363" stroke-width="1"/>
<text transform="translate(770.50,488.10) scale(0.955,1)" font-size="9.8" fill="#6c6c6c" text-anchor="middle">1200</text>
<line x1="548.5" y1="474.50" x2="551.0" y2="474.50" stroke="#636363" stroke-width="1"/>
<line x1="770.5" y1="474.50" x2="768.0" y2="474.50" stroke="#636363" stroke-width="1"/>
<text transform="translate(543.90,478.00) scale(0.955,1)" font-size="9.8" fill="#6c6c6c" text-anchor="end">0</text>
<line x1="548.5" y1="437.50" x2="551.0" y2="437.50" stroke="#636363" stroke-width="1"/>
<line x1="770.5" y1="437.50" x2="768.0" y2="437.50" stroke="#636363" stroke-width="1"/>
<text transform="translate(543.90,441.00) scale(0.955,1)" font-size="9.8" fill="#6c6c6c" text-anchor="end">10</text>
<line x1="548.5" y1="399.50" x2="551.0" y2="399.50" stroke="#636363" stroke-width="1"/>
<line x1="770.5" y1="399.50" x2="768.0" y2="399.50" stroke="#636363" stroke-width="1"/>
<text transform="translate(543.90,403.00) scale(0.955,1)" font-size="9.8" fill="#6c6c6c" text-anchor="end">20</text>
<line x1="548.5" y1="362.50" x2="551.0" y2="362.50" stroke="#636363" stroke-width="1"/>
<line x1="770.5" y1="362.50" x2="768.0" y2="362.50" stroke="#636363" stroke-width="1"/>
<text transform="translate(543.90,366.00) scale(0.955,1)" font-size="9.8" fill="#6c6c6c" text-anchor="end">30</text>
<line x1="548.5" y1="324.50" x2="551.0" y2="324.50" stroke="#636363" stroke-width="1"/>
<line x1="770.5" y1="324.50" x2="768.0" y2="324.50" stroke="#636363" stroke-width="1"/>
<text transform="translate(543.90,328.00) scale(0.955,1)" font-size="9.8" fill="#6c6c6c" text-anchor="end">40</text>
<line x1="548.5" y1="287.50" x2="551.0" y2="287.50" stroke="#636363" stroke-width="1"/>
<line x1="770.5" y1="287.50" x2="768.0" y2="287.50" stroke="#636363" stroke-width="1"/>
<text transform="translate(543.90,291.00) scale(0.955,1)" font-size="9.8" fill="#6c6c6c" text-anchor="end">50</text>
<line x1="548.5" y1="250.50" x2="551.0" y2="250.50" stroke="#636363" stroke-width="1"/>
<line x1="770.5" y1="250.50" x2="768.0" y2="250.50" stroke="#636363" stroke-width="1"/>
<text transform="translate(543.90,254.00) scale(0.955,1)" font-size="9.8" fill="#6c6c6c" text-anchor="end">60</text>
<line x1="548.5" y1="212.50" x2="551.0" y2="212.50" stroke="#636363" stroke-width="1"/>
<line x1="770.5" y1="212.50" x2="768.0" y2="212.50" stroke="#636363" stroke-width="1"/>
<text transform="translate(543.90,216.00) scale(0.955,1)" font-size="9.8" fill="#6c6c6c" text-anchor="end">70</text>
<line x1="548.5" y1="175.50" x2="551.0" y2="175.50" stroke="#636363" stroke-width="1"/>
<line x1="770.5" y1="175.50" x2="768.0" y2="175.50" stroke="#636363" stroke-width="1"/>
<text transform="translate(543.90,179.00) scale(0.955,1)" font-size="9.8" fill="#6c6c6c" text-anchor="end">80</text>
<path d="M548.0,175.5 H770.5 V475.0" fill="none" stroke="#8c8c8c" stroke-width="1"/>
<path d="M548.5,175.0 V474.5 H771.0" fill="none" stroke="#636363" stroke-width="1"/>
<text x="659.50" y="165" font-size="11" font-weight="bold" fill="#111" text-anchor="middle">Step Plot: Input disturbance rejection</text>
<text x="659.50" y="499.5" font-size="11" fill="#3a3a3a" text-anchor="middle">Time (seconds)</text>
<text transform="translate(529.4,325) rotate(-90)" font-size="11" fill="#3a3a3a" text-anchor="middle">Amplitude</text>
<defs><clipPath id="c548"><rect x="548.5" y="175.5" width="222.0" height="299.0"/></clipPath></defs>
<path d="M548.50,474.50 548.68,473.96 548.87,472.40 549.05,469.92 549.24,466.63 549.42,462.60 549.61,457.93 549.79,452.68 549.98,446.95 550.16,440.78 550.35,434.24 550.53,427.40 550.72,420.31 550.90,413.01 551.09,405.55 551.27,397.97 551.46,390.32 551.64,382.62 551.83,374.91 552.01,367.22 552.20,359.57 552.38,351.99 552.57,344.49 552.75,337.11 552.94,329.85 553.12,322.72 553.31,315.75 553.50,308.94 553.68,302.30 553.87,295.84 554.05,289.57 554.24,283.49 554.42,277.61 554.61,271.92 554.79,266.44 554.98,261.16 555.16,256.08 555.35,251.21 555.53,246.54 555.72,242.07 555.90,237.80 556.09,233.72 556.27,229.84 556.46,226.15 556.64,222.65 556.83,219.32 557.01,216.18 557.20,213.22 557.38,210.42 557.57,207.79 557.75,205.33 557.93,203.02 558.12,200.86 558.30,198.85 558.49,196.98 558.67,195.26 558.86,193.66 559.04,192.19 559.23,190.85 559.41,189.63 559.60,188.52 559.78,187.53 559.97,186.64 560.15,185.85 560.34,185.16 560.52,184.57 560.71,184.06 560.89,183.65 561.08,183.31 561.26,183.06 561.45,182.88 561.63,182.77 561.82,182.73 562.00,182.76 562.19,182.85 562.38,183.00 562.56,183.21 562.75,183.48 562.93,183.79 563.12,184.16 563.30,184.57 563.49,185.03 563.67,185.53 563.86,186.07 564.04,186.66 564.23,187.27 564.41,187.93 564.60,188.62 564.78,189.33 564.97,190.08 565.15,190.86 565.34,191.67 565.52,192.50 565.71,193.36 565.89,194.24 566.08,195.14 566.26,196.06 566.45,197.00 566.63,197.97 566.82,198.95 567.00,199.94 567.18,200.96 567.37,201.99 567.55,203.03 567.74,204.09 567.92,205.16 568.11,206.24 568.29,207.34 568.48,208.44 568.66,209.56 568.85,210.69 569.03,211.82 569.22,212.97 569.40,214.12 569.59,215.28 569.77,216.45 569.96,217.63 570.14,218.81 570.33,220.00 570.51,221.19 570.70,222.39 570.88,223.60 571.07,224.81 571.25,226.02 571.44,227.24 571.62,228.47 571.81,229.69 572.00,230.92 572.18,232.15 572.37,233.39 572.55,234.63 572.74,235.87 572.92,237.11 573.11,238.36 573.29,239.60 573.48,240.85 573.66,242.10 573.85,243.35 574.03,244.60 574.22,245.85 574.40,247.10 574.59,248.35 574.77,249.60 574.96,250.86 575.14,252.11 575.33,253.36 575.51,254.61 575.70,255.86 575.88,257.11 576.07,258.36 576.25,259.60 576.43,260.85 576.62,262.09 576.80,263.34 576.99,264.58 577.17,265.82 577.36,267.05 577.54,268.29 577.73,269.52 577.91,270.75 578.10,271.98 578.28,273.21 578.47,274.43 578.65,275.65 578.84,276.87 579.02,278.08 579.21,279.29 579.39,280.50 579.58,281.71 579.76,282.91 579.95,284.11 580.13,285.31 580.32,286.50 580.50,287.69 580.69,288.87 580.88,290.05 581.06,291.23 581.25,292.40 581.43,293.57 581.62,294.74 581.80,295.90 581.99,297.06 582.17,298.21 582.36,299.36 582.54,300.51 582.73,301.65 582.91,302.78 583.10,303.91 583.28,305.04 583.47,306.16 583.65,307.28 583.84,308.39 584.02,309.50 584.21,310.61 584.39,311.70 584.58,312.80 584.76,313.89 584.95,314.97 585.13,316.05 585.32,317.13 585.50,318.20 586.24,322.43 586.98,326.58 587.72,330.64 588.46,334.62 589.20,338.52 589.94,342.34 590.68,346.07 591.42,349.71 592.16,353.28 592.90,356.75 593.64,360.15 594.38,363.46 595.12,366.69 595.86,369.84 596.60,372.91 597.34,375.90 598.08,378.81 598.82,381.65 599.56,384.41 600.30,387.10 601.04,389.71 601.78,392.26 602.52,394.73 603.26,397.14 604.00,399.48 604.74,401.75 605.48,403.96 606.22,406.11 606.96,408.19 607.70,410.22 608.44,412.19 609.18,414.10 609.92,415.96 610.66,417.76 611.40,419.51 612.14,421.20 612.88,422.85 613.62,424.45 614.36,426.00 615.10,427.50 615.84,428.96 616.58,430.38 617.32,431.75 618.06,433.09 618.80,434.38 619.54,435.63 620.28,436.85 621.02,438.02 621.76,439.17 622.50,440.27 623.24,441.35 623.98,442.39 624.72,443.39 625.46,444.37 626.20,445.32 626.94,446.24 627.68,447.13 628.42,447.99 629.16,448.82 629.90,449.63 630.64,450.42 631.38,451.18 632.12,451.91 632.86,452.63 633.60,453.32 634.34,453.99 635.08,454.64 635.82,455.27 636.56,455.87 637.30,456.46 638.04,457.04 638.78,457.59 639.52,458.12 640.26,458.64 641.00,459.15 641.74,459.63 642.48,460.11 643.22,460.56 643.96,461.00 644.70,461.43 645.44,461.85 646.18,462.25 646.92,462.64 647.66,463.02 648.40,463.38 649.14,463.73 649.88,464.08 650.62,464.41 651.36,464.73 652.10,465.04 652.84,465.34 653.58,465.63 654.32,465.91 655.06,466.19 655.80,466.45 656.54,466.71 657.28,466.96 658.02,467.20 658.76,467.43 659.50,467.65 660.24,467.87 660.98,468.08 661.72,468.29 662.46,468.49 663.20,468.68 663.94,468.86 664.68,469.04 665.42,469.22 666.16,469.38 666.90,469.55 667.64,469.71 668.38,469.86 669.12,470.01 669.86,470.15 670.60,470.29 671.34,470.42 672.08,470.55 672.82,470.68 673.56,470.80 674.30,470.92 675.04,471.03 675.78,471.14 676.52,471.25 677.26,471.35 678.00,471.45 678.74,471.55 679.48,471.64 680.22,471.74 680.96,471.82 681.70,471.91 682.44,471.99 683.18,472.07 683.92,472.15 684.66,472.22 685.40,472.30 686.14,472.37 686.88,472.44 687.62,472.50 688.36,472.57 689.10,472.63 689.84,472.69 690.58,472.74 691.32,472.80 692.06,472.85 692.80,472.91 693.54,472.96 694.28,473.01 695.02,473.05 695.76,473.10 696.50,473.15 697.24,473.19 697.98,473.23 698.72,473.27 699.46,473.31 700.20,473.35 700.94,473.39 701.68,473.42 702.42,473.46 703.16,473.49 703.90,473.52 704.64,473.55 705.38,473.58 706.12,473.61 706.86,473.64 707.60,473.67 708.34,473.69 709.08,473.72 709.82,473.74 710.56,473.77 711.30,473.79 712.04,473.81 712.78,473.84 713.52,473.86 714.26,473.88 715.00,473.90 715.74,473.92 716.48,473.94 717.22,473.95 717.96,473.97 718.70,473.99 719.44,474.00 720.18,474.02 720.92,474.04 721.66,474.05 722.40,474.06 723.14,474.08 723.88,474.09 724.62,474.11 725.36,474.12 726.10,474.13 726.84,474.14 727.58,474.15 728.32,474.16 729.06,474.17 729.80,474.19 730.54,474.20 731.28,474.21 732.02,474.21 732.76,474.22 733.50,474.23 734.24,474.24 734.98,474.25 735.72,474.26 736.46,474.26 737.20,474.27 737.94,474.28 738.68,474.29 739.42,474.29 740.16,474.30 740.90,474.31 741.64,474.31 742.38,474.32 743.12,474.32 743.86,474.33 744.60,474.34 745.34,474.34 746.08,474.35 746.82,474.35 747.56,474.36 748.30,474.36 749.04,474.36 749.78,474.37 750.52,474.37 751.26,474.38 752.00,474.38 752.74,474.38 753.48,474.39 754.22,474.39 754.96,474.40 755.70,474.40 756.44,474.40 757.18,474.41 757.92,474.41 758.66,474.41 759.40,474.41 760.14,474.42 760.88,474.42 761.62,474.42 762.36,474.42 763.10,474.43 763.84,474.43 764.58,474.43 765.32,474.43 766.06,474.44 766.80,474.44 767.54,474.44 768.28,474.44 769.02,474.44 769.76,474.45 770.50,474.45" fill="none" stroke="#0072bd" stroke-width="2" stroke-linejoin="round" clip-path="url(#c548)"/>
<rect x="648.5" y="183.5" width="113.5" height="25" fill="#fff" stroke="#3a3a3a" stroke-width="1"/>
<line x1="652.0" y1="190.0" x2="682.0" y2="190.0" stroke="#0072bd" stroke-width="2"/>
<line x1="652.0" y1="202.0" x2="682.0" y2="202.0" stroke="#0072bd" stroke-width="2" stroke-dasharray="8.5,7"/>
<text x="684.5" y="193.6" font-size="9" fill="#3a3a3a">Tuned response</text>
<text x="684.5" y="205.4" font-size="9" fill="#3a3a3a">Baseline response</text>
  </g>
</svg>

<!-- STATUS BAR -->
<div class="a" style="left:1px;top:517px;width:798px;height:1px;background:#a8a8a8"></div>
<div class="a" style="left:1px;top:518px;width:798px;height:16px;background:#e6e6e6"></div>
<div class="a" style="left:200px;top:517px;width:1px;height:17px;background:#a6a6a6"></div>
<svg class="a" style="left:5px;top:522px" width="9" height="9" viewBox="0 0 9 9"><rect x="0" y="0" width="2" height="8" fill="#8a8a8a"/><path d="M8,0 V8 L3,4 Z" fill="#8a8a8a"/></svg>
<div class="a" style="left:203px;top:525px;width:7px;height:2px;background:#777"></div>
<div class="a" style="left:470px;top:520px;width:327px;height:13px;border:1px solid #8e8e8e;box-shadow:inset 1px 1px 0 #f4f4f4,inset -1px -1px 0 #f4f4f4;background:#e4e4e4"></div>
<div class="t" style="left:478.39px;top:520.70px;font-size:9.8px;color:#222;transform:scaleX(0.9195);transform-origin:0 0">Controller Parameters: Kp = 0.01031, Ki = 5.857e-05, Kd = 0.06341, Tf = 25.97</div>
</body></html>
